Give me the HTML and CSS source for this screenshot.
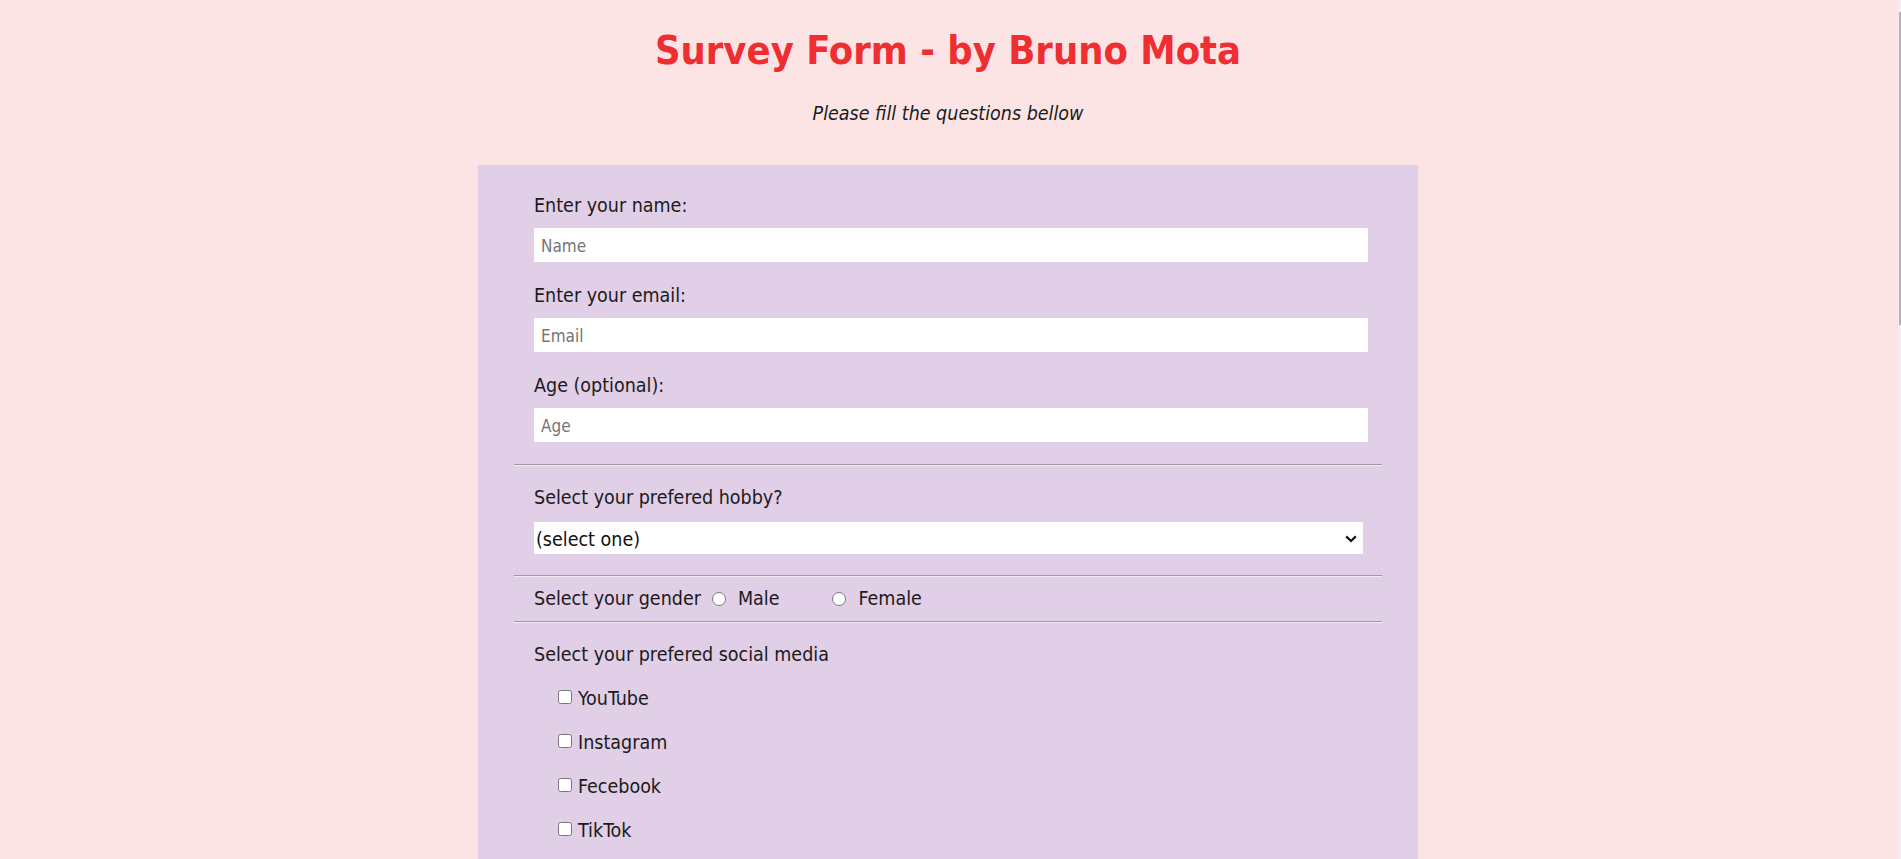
FILE: index.html
```html
<!DOCTYPE html>
<html lang="en">
<head>
<meta charset="utf-8">
<title>Survey Form</title>
<link rel="stylesheet" href="styles.css">
</head>
<body>
<header class="top">
  <h1 class="title">Survey Form - by Bruno Mota</h1>
  <p class="subtitle">Please fill the questions bellow</p>
</header>
<form class="survey">
  <div class="field">
    <label class="label" for="name">Enter your name:</label>
    <input class="text-input" id="name" type="text" placeholder="Name">
  </div>
  <div class="field">
    <label class="label" for="email">Enter your email:</label>
    <input class="text-input" id="email" type="email" placeholder="Email">
  </div>
  <div class="field">
    <label class="label" for="age">Age (optional):</label>
    <input class="text-input" id="age" type="number" placeholder="Age">
  </div>
  <hr class="divider">
  <div class="field field-select">
    <label class="label" for="hobby">Select your prefered hobby?</label>
    <div class="select-wrap">
      <select class="select-input" id="hobby">
        <option>(select one)</option>
        <option>Reading</option>
        <option>Sports</option>
        <option>Music</option>
      </select>
      <svg class="select-arrow" width="12" height="8" viewBox="0 0 12 8" aria-hidden="true">
        <path d="M1.2 1.4 L6 6 L10.8 1.4" fill="none" stroke="#111" stroke-width="2.2"/>
      </svg>
    </div>
  </div>
  <hr class="divider">
  <div class="gender-row">
    <span class="label">Select your gender</span>
    <input class="radio" type="radio" name="gender" id="male">
    <label class="choice-label male" for="male">Male</label>
    <input class="radio" type="radio" name="gender" id="female">
    <label class="choice-label" for="female">Female</label>
  </div>
  <hr class="divider">
  <div class="social">
    <p class="label">Select your prefered social media</p>
    <div class="checks">
      <label class="check-row"><input class="checkbox" type="checkbox"><span>YouTube</span></label>
      <label class="check-row"><input class="checkbox" type="checkbox"><span>Instagram</span></label>
      <label class="check-row"><input class="checkbox" type="checkbox"><span>Fecebook</span></label>
      <label class="check-row"><input class="checkbox" type="checkbox"><span>TikTok</span></label>
    </div>
  </div>
</form>
<div class="scrollbar" aria-hidden="true"><div class="scrollbar-thumb"></div></div>
</body>
</html>
```

FILE: styles.css
```css
html {
  overflow: hidden;
}

body {
  margin: 0;
  padding: 0 5px 8px 0;
  background: #fce4e4;
  font-family: "DejaVu Sans Condensed", "DejaVu Sans", sans-serif;
  color: #1b1b1b;
}

.top {
  text-align: center;
  padding-top: 26px;
}

.title {
  margin: 0;
  font-size: 39.5px;
  line-height: 48px;
  font-weight: bold;
  color: #ee2e31;
}

.subtitle {
  margin: 29px 0 0;
  font-size: 19.5px;
  line-height: 22px;
  font-style: italic;
}

.survey {
  width: 940px;
  box-sizing: border-box;
  margin: 40px auto 0;
  padding: 29px 36px 40px;
  background: #e1cee7;
  min-height: 2190px;
}

.field {
  display: flex;
  flex-direction: column;
  align-items: flex-start;
  margin-bottom: 22px;
}

.label {
  display: block;
  margin: 0 0 0 20px;
  font-size: 19.5px;
  line-height: 24px;
}

.text-input {
  margin: 10px 0 0 20px;
  width: 834px;
  height: 34px;
  box-sizing: border-box;
  border: none;
  outline: none;
  padding: 2px 7px 0;
  background: #fff;
  font-family: "DejaVu Sans Condensed", "DejaVu Sans", sans-serif;
  font-size: 17px;
  color: #1b1b1b;
}

.text-input::placeholder {
  color: #757575;
}

.text-input::-webkit-outer-spin-button,
.text-input::-webkit-inner-spin-button {
  -webkit-appearance: none;
  margin: 0;
}

.field-select {
  margin-top: 20px;
  margin-bottom: 21px;
}

.select-wrap {
  position: relative;
  margin: 12px 0 0 20px;
  width: 829px;
  height: 32px;
}

.select-input {
  -webkit-appearance: none;
  appearance: none;
  display: block;
  width: 100%;
  height: 100%;
  margin: 0;
  border: none;
  border-radius: 0;
  background: #fff;
  font-family: "DejaVu Sans Condensed", "DejaVu Sans", sans-serif;
  font-size: 19.5px;
  color: #111;
  padding: 2px 0 0 2px;
}

.select-arrow {
  position: absolute;
  right: 6px;
  top: 13px;
  pointer-events: none;
}

.divider {
  margin: 0;
  border: none;
  border-top: 1px solid #9d9aa0;
  border-bottom: 1px solid #f1eaf3;
  height: 0;
}

.field + .divider {
  margin-top: 21px;
}

.gender-row {
  display: flex;
  align-items: center;
  height: 44px;
}

.gender-row .label {
  margin-right: 6px;
}

.radio {
  margin: 0 0 0 5px;
  width: 14px;
  height: 14px;
}

.choice-label {
  margin-left: 12px;
  font-size: 19.5px;
  line-height: 22px;
}

.choice-label.male {
  margin-right: 48px;
}

.social {
  padding-top: 20px;
}

.checks {
  display: flex;
  flex-direction: column;
  gap: 22px;
  margin: 20px 0 0 40px;
}

.check-row {
  display: flex;
  align-items: center;
  font-size: 19.5px;
  line-height: 24px;
}

.check-row + .check-row {
  margin-top: -2px;
}

.checkbox {
  margin: 0 6px 0 4px;
  width: 14px;
  height: 14px;
  position: relative;
  top: -2px;
}

.scrollbar {
  position: fixed;
  top: 0;
  right: 0;
  width: 3px;
  height: 100%;
  background: #f0f0f0;
}

.scrollbar-thumb {
  margin: 12px 0 0 1px;
  width: 2px;
  height: 313px;
  background: #b3b3b3;
}
```
